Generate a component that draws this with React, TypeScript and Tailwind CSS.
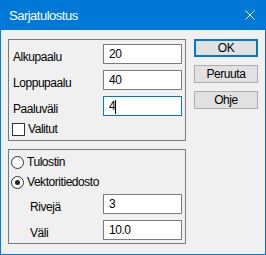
import React from 'react';

function Field({ value, focused, caret }: { value: string; focused?: boolean; caret?: boolean }) {
  return (
    <div
      className={`w-[79px] h-[20px] bg-white border pl-[5px] pt-[2px] leading-[14px] flex items-start ${
        focused ? 'border-[#0078d7]' : 'border-[#7a7a7a]'
      }`}
    >
      <span>{value}</span>
      {caret && <span className="inline-block w-px h-[14px] bg-black mt-px" />}
    </div>
  );
}

function Row({ label, children, labelWidth }: { label: string; children: React.ReactNode; labelWidth: string }) {
  return (
    <div className="flex h-[20px]">
      <span className={`${labelWidth} mt-[6px] leading-[14px]`}>{label}</span>
      {children}
    </div>
  );
}

function Radio({ label, checked }: { label: string; checked?: boolean }) {
  return (
    <div className="flex items-center h-[14px]">
      <div className="w-[13px] h-[13px] rounded-full border border-[#333333] bg-white flex items-center justify-center">
        {checked && <div className="w-[5px] h-[5px] rounded-full bg-[#222222]" />}
      </div>
      <span className="ml-[3px] leading-[14px]">{label}</span>
    </div>
  );
}

function Button({ label, primary }: { label: string; primary?: boolean }) {
  return (
    <div
      className={`w-[64px] h-[18px] bg-[#e1e1e1] flex items-center justify-center leading-[14px] ${
        primary ? 'border-2 border-[#0078d7]' : 'border border-[#adadad]'
      }`}
    >
      {label}
    </div>
  );
}

export default function App() {
  return (
    <div className="w-[266px] h-[255px] flex flex-col bg-[#0078d7] text-black font-['Liberation_Sans',Arial,sans-serif] text-[12px] tracking-[-0.45px]">
      {/* Title bar */}
      <div className="h-[30px] flex justify-between items-start pl-[9px] pr-[11px] text-white">
        <span className="pt-[8px] text-[13px] leading-[15px] tracking-[-0.5px]">Sarjatulostus</span>
        <svg width="10" height="10" viewBox="0 0 10 10" className="mt-[10px]">
          <path d="M0.5 0.5 L9.5 9.5 M9.5 0.5 L0.5 9.5" stroke="white" strokeWidth="1" />
        </svg>
      </div>

      {/* Body */}
      <div className="flex-1 mx-px mb-px bg-[#f0f0f0] flex gap-[8px] pl-[7px] pt-[9px]">
        <div className="flex flex-col gap-[8px]">
          <div className="w-[178px] h-[102px] border border-[#7a7a7a] pl-[4px] pr-[3px] pt-[4px] flex flex-col">
            <div className="flex flex-col gap-[6px]">
              <Row label="Alkupaalu" labelWidth="w-[90px]">
                <Field value="20" />
              </Row>
              <Row label="Loppupaalu" labelWidth="w-[90px]">
                <Field value="40" />
              </Row>
              <Row label="Paaluväli" labelWidth="w-[90px]">
                <Field value="4" focused caret />
              </Row>
            </div>
            <div className="flex items-start mt-[7px] -ml-px">
              <div className="w-[13px] h-[13px] border border-[#333333] bg-white" />
              <span className="ml-[3px] leading-[14px] -mt-px">Valitut</span>
            </div>
          </div>

          <div className="w-[178px] h-[95px] border border-[#7a7a7a] pl-[2px] pr-[3px] pt-[5px] flex flex-col">
            <div className="flex flex-col gap-[6px]">
              <Radio label="Tulostin" />
              <Radio label="Vektoritiedosto" checked />
            </div>
            <div className="flex flex-col gap-[6px] mt-[5px] pl-[19px]">
              <Row label="Rivejä" labelWidth="w-[73px]">
                <Field value="3" />
              </Row>
              <Row label="Väli" labelWidth="w-[73px]">
                <Field value="10.0" />
              </Row>
            </div>
          </div>
        </div>

        <div className="flex flex-col gap-[8px]">
          <Button label="OK" primary />
          <Button label="Peruuta" />
          <Button label="Ohje" />
        </div>
      </div>
    </div>
  );
}
